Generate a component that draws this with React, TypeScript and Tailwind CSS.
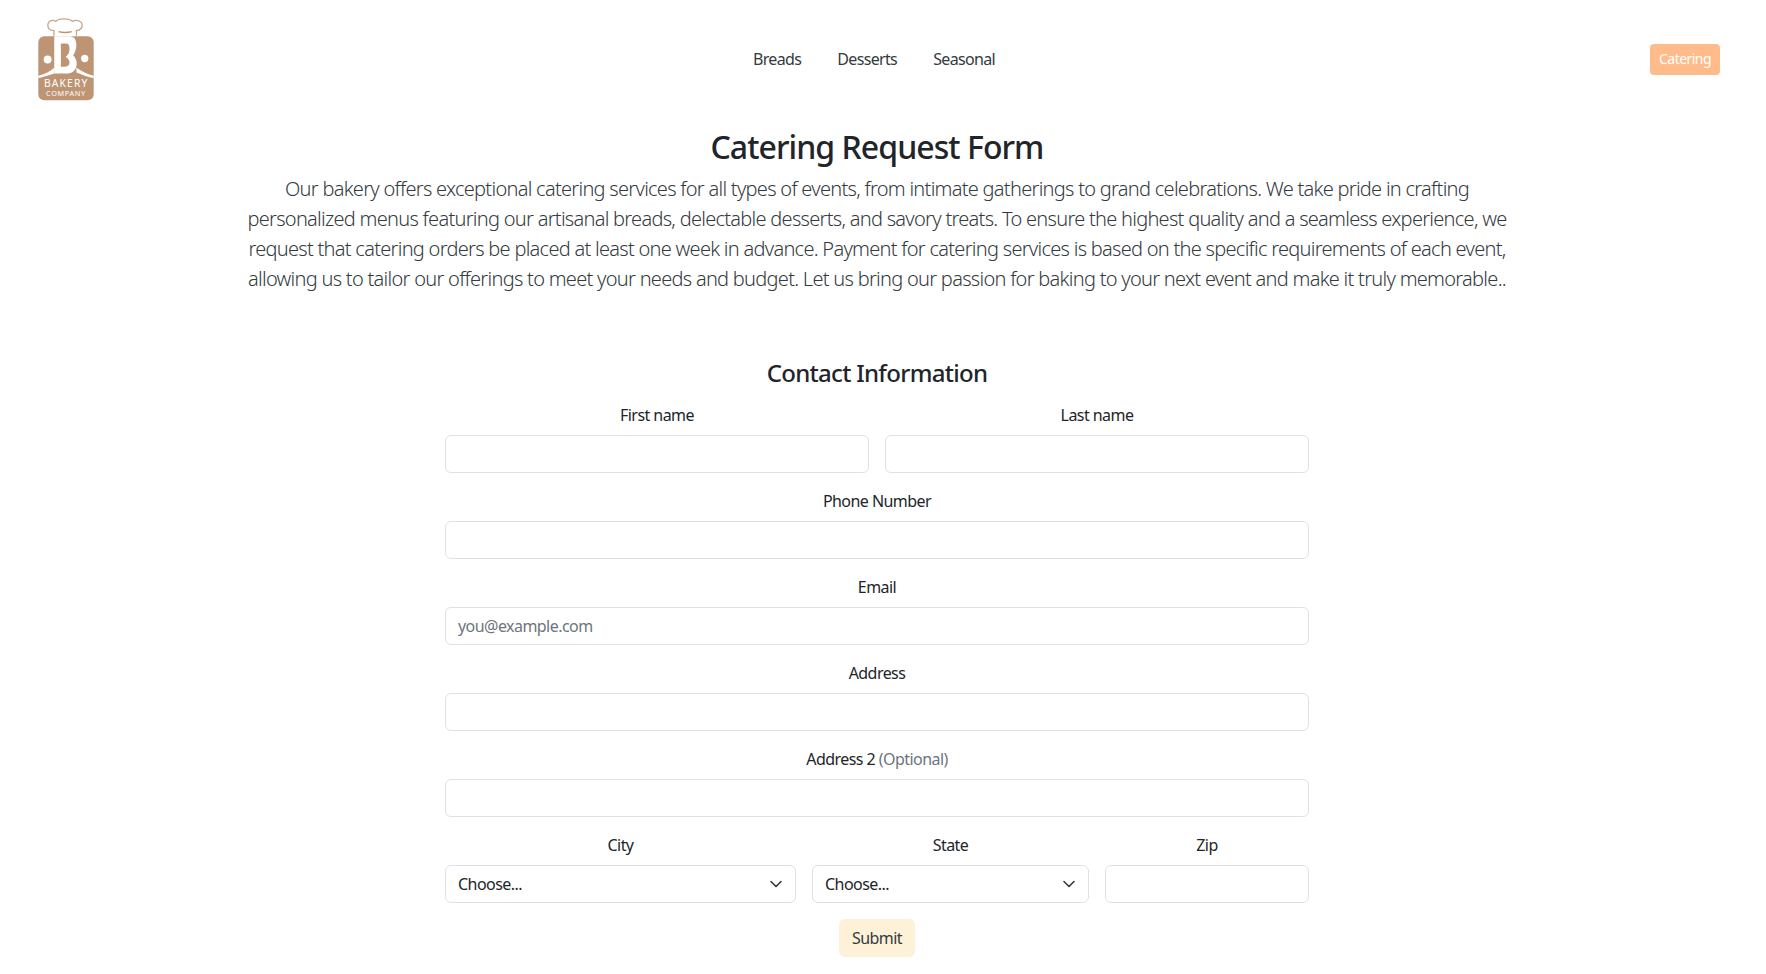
import React from 'react';

const BakeryLogo = () => (
  <svg width="63" height="87" viewBox="45 45 190 260" className="block">
    {/* chef hat */}
    <path
      d="M102 103 V88 C88 88 82 78 84 68 C86 58 98 54 108 60 C116 50 148 50 158 60 C168 54 184 58 187 68 C189 78 182 87 170 88 V103"
      fill="#fff"
      stroke="#c9a78c"
      strokeWidth="4"
    />
    <path d="M116 91 C128 94 144 94 156 91" fill="none" stroke="#bd9474" strokeWidth="4" />
    {/* body */}
    <rect x="55" y="105" width="167" height="193" rx="18" fill="#bd9474" />
    {/* letter B */}
    <path
      d="M103 105 H150 C166 105 172 122 169 140 C167 150 164 156 160 162 C168 170 173 182 170 196 C166 212 152 217 142 217 H103 Z"
      fill="#fff"
    />
    <path
      d="M123 127 H140 C147 127 150 136 149 146 C148 156 143 163 137 167 C145 172 150 178 149 186 C147 195 141 197 123 197 Z"
      fill="#bd9474"
    />
    <circle cx="83" cy="175" r="12" fill="#fff" />
    <circle cx="195" cy="172" r="11" fill="#fff" />
    <path d="M55 224 C72 220 90 212 103 200 V217 C88 222 70 228 55 231 Z" fill="#fff" />
    <path d="M222 224 C205 220 188 212 170 200 V214 C190 222 205 228 222 231 Z" fill="#fff" />
    <text x="137" y="258" textAnchor="middle" textLength={130} fill="#fff" fontSize="31" className="font-['Noto_Sans',sans-serif]">BAKERY</text>
    <text x="137" y="285" textAnchor="middle" textLength={117} fill="#fff" fontSize="22" className="font-['Noto_Sans',sans-serif]">COMPANY</text>
  </svg>
);

const inputClass =
  'block w-full h-[38px] rounded-md border border-[#dee2e6] bg-white px-3 text-base text-[#212529] placeholder:text-[#6c757d] outline-none';

const Field = ({ label, optional, placeholder }: { label: string; optional?: string; placeholder?: string }) => (
  <div className="flex-1 min-w-0">
    <label className="block mb-2 text-center h-6 leading-6 text-[#212529]">
      {label} {optional && <span className="text-[#6c757d]">{optional}</span>}
    </label>
    <input className={inputClass} placeholder={placeholder} />
  </div>
);

const SelectField = ({ label, className }: { label: string; className: string }) => (
  <div className={className}>
    <label className="block mb-2 text-center h-6 leading-6 text-[#212529]">{label}</label>
    <div className="relative">
      <select className={`${inputClass} appearance-none`}>
        <option>Choose...</option>
      </select>
      <svg width="16" height="16" viewBox="0 0 16 16" className="absolute right-3 top-[11px] pointer-events-none">
        <path d="M3 5.5l5 5 5-5" fill="none" stroke="#343a40" strokeWidth="1.6" strokeLinecap="round" strokeLinejoin="round" />
      </svg>
    </div>
  </div>
);

export default function App() {
  return (
    <div className="min-h-[974px] bg-white text-[#212529] font-['Noto_Sans',sans-serif] text-base tracking-[-0.55px]">
      <header className="flex items-center justify-between pl-[35px] pr-[46px] h-[118px]">
        <BakeryLogo />
        <nav className="flex items-center gap-[4px] tracking-[-0.65px]">
          {['Breads', 'Desserts', 'Seasonal'].map((item) => (
            <a key={item} href="#" className="px-4 py-2 text-[#343a40]">
              {item}
            </a>
          ))}
        </nav>
        <button className="h-[31px] w-[70px] rounded bg-[#ffbb8a] text-sm text-white">Catering</button>
      </header>

      {/* content sits a little left of page centre in the reference */}
      <main className="flex flex-col items-center pr-3">
        <h2 className="text-[32px] leading-[38px] font-medium text-center mt-[10px] mb-2 tracking-[-0.95px]">
          Catering Request Form
        </h2>
        <p className="w-[1296px] text-xl leading-[30px] font-light text-center text-[#343a40] px-3 tracking-[-0.72px]">
          Our bakery offers exceptional catering services for all types of events, from intimate gatherings to grand
          celebrations. We take pride in crafting personalized menus featuring our artisanal breads, delectable
          desserts, and savory treats. To ensure the highest quality and a seamless experience, we request that catering
          orders be placed at least one week in advance. Payment for catering services is based on the specific
          requirements of each event, allowing us to tailor our offerings to meet your needs and budget. Let us bring
          our passion for baking to your next event and make it truly memorable..
        </p>

        <form className="w-[864px] mt-[64px] flex flex-col gap-4">
          <h4 className="text-2xl leading-[29px] font-medium text-center tracking-[-0.7px]">Contact Information</h4>
          <div className="flex gap-4">
            <Field label="First name" />
            <Field label="Last name" />
          </div>
          <Field label="Phone Number" />
          <Field label="Email" placeholder="you@example.com" />
          <Field label="Address" />
          <Field label="Address 2" optional="(Optional)" />
          <div className="flex gap-4">
            <SelectField label="City" className="w-[351px]" />
            <SelectField label="State" className="w-[277px]" />
            <Field label="Zip" />
          </div>
          <div className="flex justify-center">
            <button type="button" className="h-[38px] w-[76px] rounded-md bg-[#fdf1d7] text-[#343a40]">
              Submit
            </button>
          </div>
        </form>
      </main>
    </div>
  );
}
